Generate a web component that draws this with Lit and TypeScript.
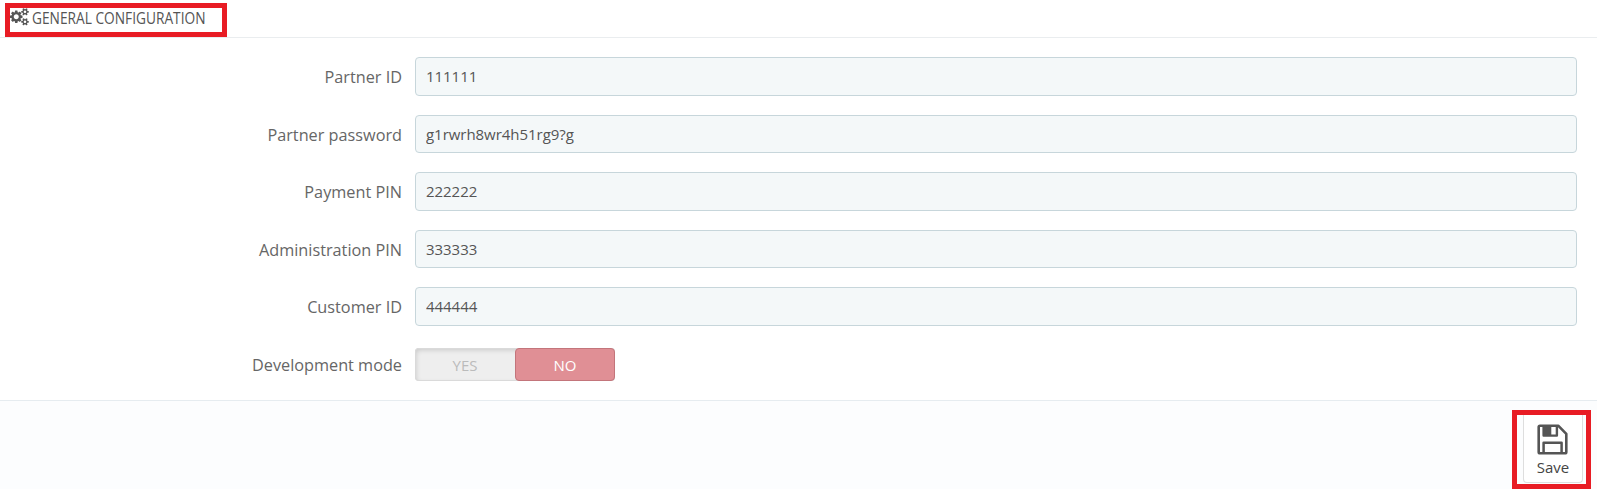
import { LitElement, html, css } from "lit";
import { customElement, property, state } from "lit/decorators.js";

const COGS =
  "M896 896q0-106-75-181t-181-75-181 75-75 181 75 181 181 75 181-75 75-181zm768 512q0-52-38-90t-90-38-90 38-38 90q0 53 37.5 90.5t90.5 37.5 90.5-37.5 37.5-90.5zm0-1024q0-52-38-90t-90-38-90 38-38 90q0 53 37.5 90.5t90.5 37.5 90.5-37.5 37.5-90.5zm-384 421v185q0 10-7 19.5t-16 10.5l-155 24q-11 35-32 76 34 48 90 115 7 11 7 20 0 12-7 19-23 30-82.5 89.5t-78.5 59.5q-11 0-21-7l-115-90q-37 19-77 31-11 108-23 155-7 24-30 24h-186q-11 0-20-7.5t-10-17.5l-23-153q-34-10-75-31l-118 89q-7 7-20 7-11 0-21-8-144-133-144-160 0-9 7-19 10-14 41-53t47-61q-23-44-35-82l-152-24q-10-1-17-9.5t-7-19.5v-185q0-10 7-19.5t16-10.5l155-24q11-35 32-76-34-48-90-115-7-11-7-20 0-12 7-20 22-30 82-89t79-59q11 0 21 7l115 90q34-18 77-32 11-108 23-154 7-24 30-24h186q11 0 20 7.5t10 17.5l23 153q34 10 75 31l118-89q8-7 20-7 11 0 21 8 144 133 144 160 0 8-7 19-12 16-42 54t-45 60q23 48 34 82l152 23q10 2 17 10.5t7 19.5zm640 533v140q0 16-149 31-12 27-30 52 51 113 51 138 0 4-4 7-122 71-124 71-8 0-46-47t-52-68q-20 2-30 2t-30-2q-14 21-52 68t-46 47q-2 0-124-71-4-3-4-7 0-25 51-138-18-25-30-52-149-15-149-31v-140q0-16 149-31 13-29 30-52-51-113-51-138 0-4 4-7 4-2 35-20t59-34 30-16q8 0 46 46.5t52 67.5q20-2 30-2t30 2q51-71 92-112l6-2q4 0 124 70 4 3 4 7 0 25-51 138 17 23 30 52 149 15 149 31zm0-1024v140q0 16-149 31-12 27-30 52 51 113 51 138 0 4-4 7-122 71-124 71-8 0-46-47t-52-68q-20 2-30 2t-30-2q-14 21-52 68t-46 47q-2 0-124-71-4-3-4-7 0-25 51-138-18-25-30-52-149-15-149-31v-140q0-16 149-31 13-29 30-52-51-113-51-138 0-4 4-7 4-2 35-20t59-34 30-16q8 0 46 46.5t52 67.5q20-2 30-2t30 2q51-71 92-112l6-2q4 0 124 70 4 3 4 7 0 25-51 138 17 23 30 52 149 15 149 31z";

@customElement("config-field")
class ConfigField extends LitElement {
  @property() label = "";
  @property() value = "";

  static styles = css`
    :host {
      display: grid;
      grid-template-columns: 402px 1fr;
      column-gap: 13px;
      align-items: center;
      height: 38.5px;
    }
    .label {
      padding-top: 2px;
      text-align: right;
      font-size: 16.25px;
      line-height: 22px;
      color: #666;
    }
    .input {
      box-sizing: border-box;
      width: 100%;
      height: 100%;
      min-width: 0;
      margin: 0;
      padding: 0 10px;
      font: 15px "Open Sans", sans-serif;
      letter-spacing: -0.04px;
      color: #555;
      background: #f4f8f9;
      border: 1px solid #c7d6db;
      border-radius: 4px;
      outline: none;
    }
  `;

  render() {
    return html`
      <label class="label" for="field">${this.label}</label>
      <input class="input" id="field" type="text" .value=${this.value} />
    `;
  }
}

@customElement("mode-switch")
class ModeSwitch extends LitElement {
  @state() private on = false;

  static styles = css`
    :host {
      display: flex;
      box-sizing: border-box;
      width: 200px;
      height: 33px;
      background: #eee;
      border-radius: 4px;
      box-shadow: inset 0 0 0 1px #dadada, inset 1px 2px 5px rgba(0, 0, 0, 0.16);
    }
    .option {
      flex: 1;
      box-sizing: border-box;
      padding: 2px 0 0;
      border: 1px solid transparent;
      border-radius: 4px;
      background: none;
      font: 15px "Open Sans", sans-serif;
      color: #bbb;
    }
    .active {
      color: #fff;
      background: #e08f95;
      border-color: #c3757b;
    }
  `;

  render() {
    return html`
      <button class="option ${this.on ? "active" : ""}" @click=${() => (this.on = true)}>YES</button>
      <button class="option ${this.on ? "" : "active"}" @click=${() => (this.on = false)}>NO</button>
    `;
  }
}

@customElement("app-root")
class AppRoot extends LitElement {
  static styles = css`
    :host {
      display: flex;
      flex-direction: column;
      height: 489px;
      overflow: hidden;
      background: #fff;
      font-family: "Open Sans", sans-serif;
    }
    .header {
      box-sizing: border-box;
      height: 38px;
      padding: 3px 0 0 5px;
      border-bottom: 1px solid #eaedef;
    }
    .title-box {
      box-sizing: border-box;
      display: flex;
      width: 222px;
      height: 34px;
      border: 5px solid #e81c24;
    }
    .cogs {
      flex: none;
      width: 18.75px;
      height: 17.5px;
      fill: #555;
    }
    .title {
      margin: -1px 0 0 3.2px;
      font-size: 17px;
      font-weight: 400;
      line-height: 22px;
      color: #555;
      white-space: nowrap;
      transform: scaleX(0.807);
      transform-origin: 0 0;
    }
    .body {
      box-sizing: border-box;
      height: 362px;
      padding: 19px 20px 0 0;
      display: flex;
      flex-direction: column;
      gap: 19px;
    }
    .mode {
      display: grid;
      grid-template-columns: 402px 1fr;
      column-gap: 13px;
      align-items: center;
      height: 38px;
      padding-top: 1px;
      box-sizing: border-box;
    }
    .label {
      padding-top: 2px;
      text-align: right;
      font-size: 16.25px;
      line-height: 22px;
      color: #666;
    }
    .footer {
      flex: 1;
      box-sizing: border-box;
      display: flex;
      justify-content: flex-end;
      padding: 9px 6px 0 0;
      background: #fcfdfe;
      border-top: 1px solid #e6ecf0;
    }
    .save-box {
      box-sizing: border-box;
      display: flex;
      width: 79px;
      height: 79px;
      padding: 0 3px 1px 6px;
      border: 5px solid #e81c24;
    }
    .save {
      box-sizing: border-box;
      display: flex;
      flex-direction: column;
      align-items: center;
      width: 60px;
      padding: 9px 0 0;
      background: #fff;
      border: 1px solid #dedede;
      border-top: 0;
      border-radius: 0 0 4px 4px;
      font: 15px/20px "Open Sans", sans-serif;
      color: #444;
    }
    .disk {
      flex: none;
      width: 31px;
      height: 31px;
      margin: 0 1px 2px 0;
    }
  `;

  private fields = [
    ["Partner ID", "111111"],
    ["Partner password", "g1rwrh8wr4h51rg9?g"],
    ["Payment PIN", "222222"],
    ["Administration PIN", "333333"],
    ["Customer ID", "444444"],
  ];

  render() {
    return html`
      <header class="header">
        <div class="title-box">
          <svg class="cogs" viewBox="0 0 1920 1792"><path d=${COGS} /></svg>
          <h3 class="title">GENERAL CONFIGURATION</h3>
        </div>
      </header>
      <main class="body">
        ${this.fields.map(
          ([label, value]) => html`<config-field .label=${label} .value=${value}></config-field>`
        )}
        <div class="mode">
          <span class="label">Development mode</span>
          <mode-switch></mode-switch>
        </div>
      </main>
      <footer class="footer">
        <div class="save-box">
          <button class="save">
            <svg class="disk" viewBox="0 0 31 31" fill="none" stroke="#555" stroke-width="2.6">
              <path d="M3 1.7H21.2L29.3 9.8V28Q29.3 29.3 28 29.3H3Q1.7 29.3 1.7 28V3Q1.7 1.7 3 1.7Z" stroke-linejoin="round" />
              <path d="M6.6 1.7V11.6H19.9V1.7" stroke-width="2.4" stroke-linejoin="round" />
              <path d="M6.6 2H14.3V12H6.6Z" fill="#555" stroke="none" />
              <path d="M6.6 29V18.8H24.6V29" stroke-width="2.5" stroke-linejoin="round" />
            </svg>
            Save
          </button>
        </div>
      </footer>
    `;
  }
}
